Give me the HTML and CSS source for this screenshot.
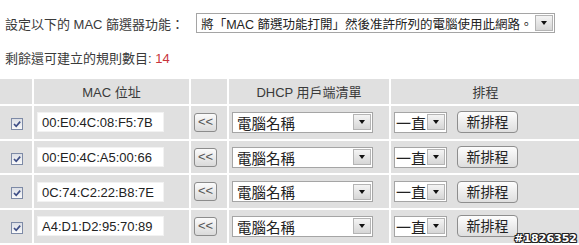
FILE: index.html
```html
<!DOCTYPE html>
<html lang="zh-Hant">
<head>
  <meta charset="UTF-8">
  <title>MAC 篩選器</title>
  <link rel="stylesheet" href="styles.css">
</head>
<body>

  <div class="filter-line">
    <span class="label">設定以下的 MAC 篩選器功能：</span>
    <div class="combo combo-mode">
      <span class="combo-text">將「MAC 篩選功能打開」然後准許所列的電腦使用此網路。</span>
      <span class="combo-arrow"></span>
    </div>
  </div>

  <div class="count-line">剩餘還可建立的規則數目: <span class="count">14</span></div>

  <table class="rules">
    <tr class="head">
      <th class="c-check"></th>
      <th class="c-mac">MAC 位址</th>
      <th class="c-copy"></th>
      <th class="c-dhcp">DHCP 用戶端清單</th>
      <th class="c-sched">排程</th>
    </tr>
    <tr>
      <td class="c-check"><span class="check"><svg viewBox="0 0 10 10"><path d="M2 5 L4.2 7.3 L8.2 2.6"/></svg></span></td>
      <td class="c-mac"><div class="mac">00:E0:4C:08:F5:7B</div></td>
      <td class="c-copy"><span class="btn-copy">&lt;&lt;</span></td>
      <td class="c-dhcp"><div class="combo combo-dhcp"><span class="combo-text">電腦名稱</span><span class="combo-arrow"></span></div></td>
      <td class="c-sched"><div class="sched"><div class="combo combo-always"><span class="combo-text">一直</span><span class="combo-arrow"></span></div><span class="btn-new">新排程</span></div></td>
    </tr>
    <tr>
      <td class="c-check"><span class="check"><svg viewBox="0 0 10 10"><path d="M2 5 L4.2 7.3 L8.2 2.6"/></svg></span></td>
      <td class="c-mac"><div class="mac">00:E0:4C:A5:00:66</div></td>
      <td class="c-copy"><span class="btn-copy">&lt;&lt;</span></td>
      <td class="c-dhcp"><div class="combo combo-dhcp"><span class="combo-text">電腦名稱</span><span class="combo-arrow"></span></div></td>
      <td class="c-sched"><div class="sched"><div class="combo combo-always"><span class="combo-text">一直</span><span class="combo-arrow"></span></div><span class="btn-new">新排程</span></div></td>
    </tr>
    <tr>
      <td class="c-check"><span class="check"><svg viewBox="0 0 10 10"><path d="M2 5 L4.2 7.3 L8.2 2.6"/></svg></span></td>
      <td class="c-mac"><div class="mac">0C:74:C2:22:B8:7E</div></td>
      <td class="c-copy"><span class="btn-copy">&lt;&lt;</span></td>
      <td class="c-dhcp"><div class="combo combo-dhcp"><span class="combo-text">電腦名稱</span><span class="combo-arrow"></span></div></td>
      <td class="c-sched"><div class="sched"><div class="combo combo-always"><span class="combo-text">一直</span><span class="combo-arrow"></span></div><span class="btn-new">新排程</span></div></td>
    </tr>
    <tr>
      <td class="c-check"><span class="check"><svg viewBox="0 0 10 10"><path d="M2 5 L4.2 7.3 L8.2 2.6"/></svg></span></td>
      <td class="c-mac"><div class="mac">A4:D1:D2:95:70:89</div></td>
      <td class="c-copy"><span class="btn-copy">&lt;&lt;</span></td>
      <td class="c-dhcp"><div class="combo combo-dhcp"><span class="combo-text">電腦名稱</span><span class="combo-arrow"></span></div></td>
      <td class="c-sched"><div class="sched"><div class="combo combo-always"><span class="combo-text">一直</span><span class="combo-arrow"></span></div><span class="btn-new">新排程</span></div></td>
    </tr>
    <tr class="tail">
      <td></td><td></td><td></td><td></td><td></td>
    </tr>
  </table>

  <div class="stamp">#1826352</div>

</body>
</html>
```

FILE: styles.css
```css
body {
  margin: 0;
  background: #fff;
  font-family: 'Liberation Sans', 'Noto Sans CJK TC', sans-serif;
  font-size: 13px;
  color: #3a3a3a;
  position: relative;
  height: 245px;
  overflow: hidden;
}

.filter-line {
  display: flex;
  align-items: center;
  padding: 13px 0 0 5px;
}

.label {
  margin-right: 12px;
}

/* old style drop-down box */
.combo {
  display: flex;
  align-items: center;
  justify-content: space-between;
  box-sizing: border-box;
  height: 20px;
  background: #fff;
  border: 1px solid #a5a5a5;
  color: #222;
}

.combo-text {
  padding-left: 4px;
  white-space: nowrap;
}

.combo-arrow {
  position: relative;
  box-sizing: border-box;
  width: 18px;
  height: 16px;
  margin-right: 1px;
  border: 1px solid #b4b4b4;
  background: linear-gradient(#f4f4f4, #d6d6d6);
  flex-shrink: 0;
}

.combo-arrow::after {
  content: "";
  position: absolute;
  left: 5px;
  top: 5px;
  border-left: 3.5px solid transparent;
  border-right: 3.5px solid transparent;
  border-top: 4px solid #111;
}

.combo-mode {
  width: 359px;
  font-size: 12.5px;
}

.count-line {
  margin-top: 18px;
  padding-left: 5px;
  line-height: 16px;
}

.count {
  color: #c8343c;
}

.rules {
  margin: 10px 0 0 -2px;
  border-spacing: 2px;
  background: #fff;
  width: 584px;
  table-layout: fixed;
}

.rules th,
.rules td {
  background: #e0e0e0;
  padding: 0;
}

.rules th {
  height: 25px;
  font-weight: normal;
  color: #3a3a3a;
}

.rules td {
  height: 32.7px;
}

.rules .tail td {
  height: 10px;
}

.c-check { width: 32px; text-align: center; }
.c-mac { width: 155px; }
.c-copy { width: 36px; }
.c-dhcp { width: 160px; }

.check {
  display: inline-block;
  box-sizing: border-box;
  width: 12px;
  height: 12px;
  margin: 1px 0 0 1px;
  border: 1px solid #7d8aa6;
  background: linear-gradient(#dcdfe6, #fafafa);
  vertical-align: middle;
}

.check svg {
  display: block;
  width: 10px;
  height: 10px;
  fill: none;
  stroke: #3e4e86;
  stroke-width: 1.7;
}

.mac {
  box-sizing: border-box;
  width: 127px;
  height: 20px;
  margin-left: 3px;
  padding-left: 4px;
  line-height: 20px;
  background: #fff;
  border: 1px solid #f2f2f2;
  color: #222;
}

.btn-copy {
  display: block;
  box-sizing: border-box;
  width: 23px;
  height: 19px;
  line-height: 16px;
  margin-left: 3px;
  border: 1px solid #8c8c8c;
  border-radius: 3px;
  background: linear-gradient(#fbfbfb, #dadada);
  color: #555;
  font-size: 13px;
  text-align: center;
}

.combo-dhcp {
  width: 141px;
  height: 21px;
  margin-left: 3px;
  font-size: 14.5px;
}

.sched {
  display: flex;
  align-items: center;
  padding-left: 3px;
}

.combo-always {
  width: 53px;
  height: 21px;
  font-size: 15px;
}

.combo-always .combo-text {
  padding-left: 1px;
}

.btn-new {
  box-sizing: border-box;
  width: 61px;
  height: 22px;
  margin-left: 10px;
  line-height: 20px;
  text-align: center;
  border: 1px solid #8e8e8e;
  border-radius: 4px;
  background: linear-gradient(#fdfdfd, #dedede);
  color: #222;
  font-size: 14px;
}

.stamp {
  position: absolute;
  right: 2px;
  bottom: 0;
  font-family: 'DejaVu Sans', sans-serif;
  font-weight: bold;
  font-size: 11px;
  color: #fff;
  text-shadow: 1px 0 #222, -1px 0 #222, 0 1px #222, 0 -1px #222, 1px 1px #222, -1px -1px #222, 1px -1px #222, -1px 1px #222;
}
```
